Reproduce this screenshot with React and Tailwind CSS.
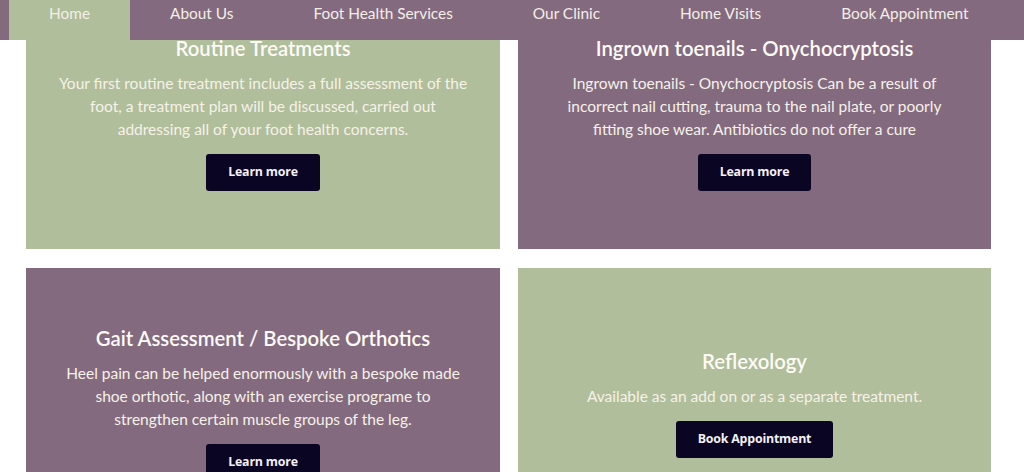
const navItems = ["Home", "About Us", "Foot Health Services", "Our Clinic", "Home Visits", "Book Appointment"];

const cards = [
    {
        title: "Routine Treatments",
        lines: [
            "Your first routine treatment includes a full assessment of the",
            "foot, a treatment plan will be discussed, carried out",
            "addressing all of your foot health concerns.",
        ],
        button: "Learn more",
        bg: "bg-[#b0be9b]",
    },
    {
        title: "Ingrown toenails - Onychocryptosis",
        lines: [
            "Ingrown toenails - Onychocryptosis Can be a result of",
            "incorrect nail cutting, trauma to the nail plate, or poorly",
            "fitting shoe wear. Antibiotics do not offer a cure",
        ],
        button: "Learn more",
        bg: "bg-[#846a7f]",
    },
    {
        title: "Gait Assessment / Bespoke Orthotics",
        lines: [
            "Heel pain can be helped enormously with a bespoke made",
            "shoe orthotic, along with an exercise programe to",
            "strengthen certain muscle groups of the leg.",
        ],
        button: "Learn more",
        bg: "bg-[#846a7f]",
    },
    {
        title: "Reflexology",
        lines: ["Available as an add on or as a separate treatment."],
        button: "Book Appointment",
        bg: "bg-[#b0be9b]",
    },
];

function Card({ title, lines, button, bg }) {
    return (
        <div className={`${bg} h-[271px] flex flex-col items-center justify-center text-center px-6`}>
            <h2 className="text-[20.3px] leading-[24px] font-semibold text-[#fdfbf6] mb-[12px]">{title}</h2>
            <p className="text-[15.5px] leading-[23px] text-[#f6f2e8] mb-[13px]">
                {lines.map((l, i) => (
                    <span key={i} className="block">{l}</span>
                ))}
            </p>
            <a href="#" className="bg-[#0b0524] text-[#f3f0f6] rounded-[3px] h-[37px] px-[22px] flex items-center text-[12.4px] font-bold tracking-[-0.2px] font-['Open_Sans',sans-serif]">
                {button}
            </a>
        </div>
    );
}

export default function App() {
    return (
        <div className="relative min-h-[472px] h-[472px] overflow-hidden bg-white font-['Lato',sans-serif]">
            {/* Nav */}
            <nav className="absolute top-0 left-0 right-0 z-10 h-[40px] bg-[#846a7f] pl-[9px]">
                <ul className="flex h-full">
                    {navItems.map((item, i) => (
                        <li
                            key={item}
                            className={`h-full px-[40px] pt-[2px] text-[15.4px] leading-[22px] text-[#f3eee6] ${i === 0 ? "bg-[#b0be9b]" : ""}`}
                        >
                            {item}
                        </li>
                    ))}
                </ul>
            </nav>

            {/* Services */}
            <div className="mt-[-22px] pl-[26px] grid grid-cols-[474px_473px] gap-x-[18px] gap-y-[19px]">
                {cards.map((c) => (
                    <Card key={c.title} {...c} />
                ))}
            </div>
        </div>
    );
}
